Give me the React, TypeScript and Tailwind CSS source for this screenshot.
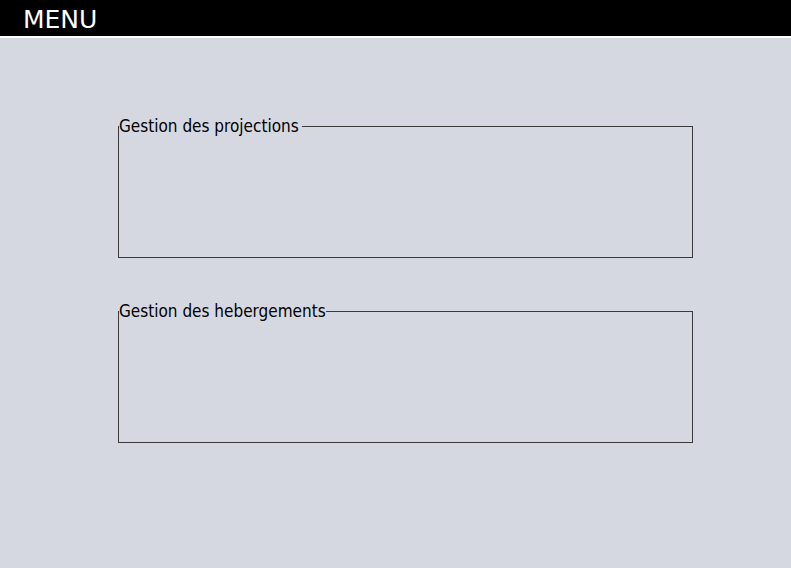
export default function App() {
    return (
        <div className="min-h-[568px] bg-[#d5d8e0]" style={{ fontFamily: '"DejaVu Sans Condensed", "Liberation Sans Narrow", sans-serif' }}>
            {/* Header */}
            <div className="h-[38px] bg-black border-b-2 border-white flex items-center pl-[23px]">
                <span className="text-white text-[25px] leading-none pt-[2px] font-['DejaVu_Sans',sans-serif]">MENU</span>
            </div>

            <div className="pl-[118px] pt-[78px] flex flex-col gap-[43px]">
                <fieldset className="w-[575px] h-[142px] border border-[#3a3a3a] p-0 m-0">
                    <legend className="p-0 pr-[3px] text-[17px] leading-[20px] text-black">Gestion des projections</legend>
                </fieldset>
                <fieldset className="w-[575px] h-[142px] border border-[#3a3a3a] p-0 m-0">
                    <legend className="p-0 text-[17px] leading-[20px] text-black">Gestion des hebergements</legend>
                </fieldset>
            </div>
        </div>
    );
}
